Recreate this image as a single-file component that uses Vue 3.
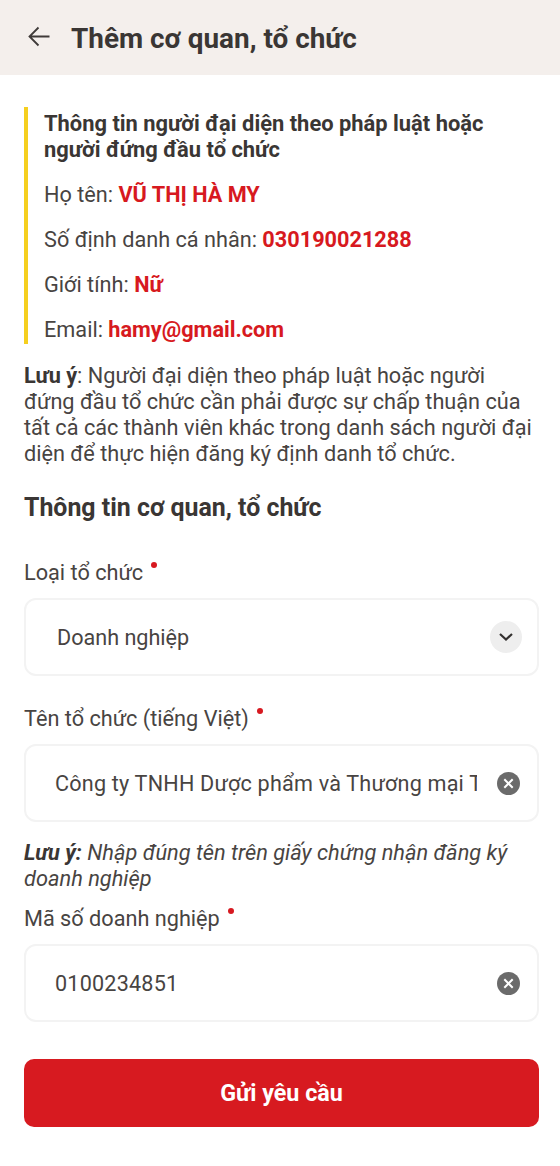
<script setup>
const info = [
  { label: 'Họ tên:', value: 'VŨ THỊ HÀ MY' },
  { label: 'Số định danh cá nhân:', value: '030190021288' },
  { label: 'Giới tính:', value: 'Nữ' },
  { label: 'Email:', value: 'hamy@gmail.com' }
]
</script>

<template>
  <div class="page">
    <header class="topbar">
      <svg class="back" width="26" height="26" viewBox="0 0 26 26" fill="none">
        <path d="M22.5 12.5H3M11.5 3.5L2.5 12.5L11.5 21.5" stroke="#3f3a38" stroke-width="1.8" />
      </svg>
      <h1 class="title">Thêm cơ quan, tổ chức</h1>
    </header>

    <main class="content">
      <section class="rep">
        <h2 class="rep-title">Thông tin người đại diện theo pháp luật hoặc người đứng đầu tổ chức</h2>
        <p v-for="row in info" :key="row.label" class="rep-row">
          {{ row.label }} <b class="red">{{ row.value }}</b>
        </p>
      </section>

      <p class="note"><b>Lưu ý</b>: Người đại diện theo pháp luật hoặc người đứng đầu tổ chức cần phải được sự chấp thuận của tất cả các thành viên khác trong danh sách người đại diện để thực hiện đăng ký định danh tổ chức.</p>

      <h2 class="section">Thông tin cơ quan, tổ chức</h2>

      <label class="label first">Loại tổ chức<span class="dot"></span></label>
      <div class="field select">
        <span class="val">Doanh nghiệp</span>
        <span class="chev">
          <svg width="16" height="10" viewBox="0 0 16 10" fill="none"><path d="M2 2L8 7.5L14 2" stroke="#33302f" stroke-width="2.2" /></svg>
        </span>
      </div>

      <label class="label second">Tên tổ chức (tiếng Việt)<span class="dot"></span></label>
      <div class="field">
        <span class="val clip">Công ty TNHH Dược phẩm và Thương mại Thành Công</span>
        <span class="clear">
          <svg width="11" height="11" viewBox="0 0 11 11" fill="none"><path d="M1.3 1.3L9.7 9.7M9.7 1.3L1.3 9.7" stroke="#fff" stroke-width="2" /></svg>
        </span>
      </div>

      <p class="hint"><b>Lưu ý:</b> Nhập đúng tên trên giấy chứng nhận đăng ký doanh nghiệp</p>

      <label class="label third">Mã số doanh nghiệp<span class="dot"></span></label>
      <div class="field">
        <span class="val clip">0100234851</span>
        <span class="clear">
          <svg width="11" height="11" viewBox="0 0 11 11" fill="none"><path d="M1.3 1.3L9.7 9.7M9.7 1.3L1.3 9.7" stroke="#fff" stroke-width="2" /></svg>
        </span>
      </div>

      <button class="submit" type="button">Gửi yêu cầu</button>
    </main>
  </div>
</template>

<style>
html, body { margin: 0; background: #fff; }
</style>

<style scoped>
.page {
  width: 560px;
  height: 1166px;
  overflow: hidden;
  background: #fff;
  font-family: Roboto, "Liberation Sans", sans-serif;
  color: #484442;
}
.topbar {
  height: 75px;
  background: #f4efec;
  display: flex;
  align-items: center;
  padding-left: 27px;
  box-sizing: border-box;
}
.back { margin-top: -2px; }
.title {
  margin: 0 0 0 18px;
  font-size: 27.9px;
  line-height: 32px;
  font-weight: 700;
  color: #3a3634;
  padding-top: 2px;
}
.content {
  padding: 32px 22px 0 24px;
}
.rep {
  border-left: 4px solid #f5cf1f;
  padding: 4px 0 0 16px;
  height: 237px;
  box-sizing: border-box;
}
.rep-title {
  margin: 0;
  font-size: 21.9px;
  line-height: 26px;
  font-weight: 700;
  color: #3a3634;
}
.rep-row {
  margin: 19px 0 0;
  font-size: 21.7px;
  line-height: 26px;
}
.rep-row b { font-weight: 700; }
.red { color: #d71920; }
.note {
  margin: 19px 0 0;
  font-size: 21.7px;
  line-height: 26px;
}
.note b, .hint b { color: #3a3634; }
.section {
  margin: 26px 0 0;
  font-size: 24.9px;
  line-height: 30px;
  font-weight: 700;
  color: #3a3634;
}
.label {
  display: block;
  font-size: 21.7px;
  line-height: 26px;
  position: relative;
}
.label.first { margin-top: 37px; }
.label.second { margin-top: 30px; }
.label.third { margin-top: 14px; }
.dot {
  display: inline-block;
  width: 6px;
  height: 6px;
  border-radius: 50%;
  background: #d71920;
  margin-left: 8px;
  vertical-align: 12px;
}
.field {
  margin-top: 12px;
  height: 78px;
  width: 515px;
  box-sizing: border-box;
  border: 2px solid #f3f3f3;
  border-radius: 12px;
  display: flex;
  align-items: center;
  padding: 0 17px 0 29px;
  font-size: 21.6px;
}
.select { padding-left: 31px; padding-right: 15px; }
.val { flex: 1; min-width: 0; }
.clip { white-space: nowrap; overflow: hidden; letter-spacing: 0.2px; }
.chev {
  width: 32px;
  height: 32px;
  border-radius: 50%;
  background: #eeeeee;
  display: flex;
  align-items: center;
  justify-content: center;
  flex: none;
}
.clear {
  width: 23px;
  height: 23px;
  margin-left: 20px;
  border-radius: 50%;
  background: #6b6b6b;
  display: flex;
  align-items: center;
  justify-content: center;
  flex: none;
}
.hint {
  margin: 18px 0 0;
  font-size: 21.8px;
  line-height: 26px;
  font-style: italic;
}
.submit {
  display: block;
  margin-top: 37px;
  width: 515px;
  height: 68px;
  border: none;
  border-radius: 10px;
  background: #d71a20;
  color: #fff;
  font-family: inherit;
  font-size: 23.3px;
  font-weight: 700;
}
</style>
